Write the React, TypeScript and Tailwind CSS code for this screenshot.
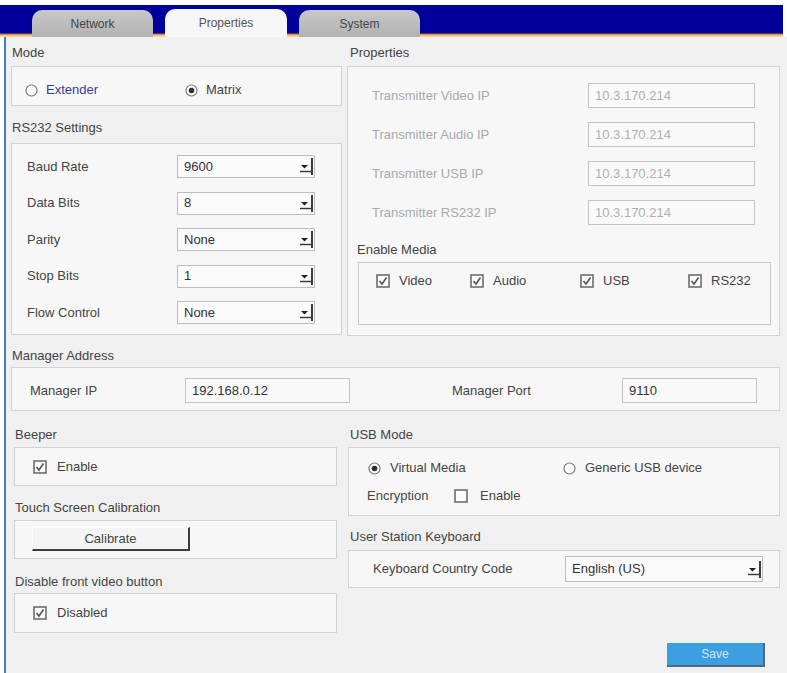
import type { ReactNode } from 'react';

function Label({ children, className = '' }: { children: ReactNode; className?: string }) {
  return <div className={`text-[13px] leading-[16px] text-[#444] ${className}`}>{children}</div>;
}

function CheckBox({ checked = true }: { checked?: boolean }) {
  return (
    <svg width="14" height="14" viewBox="0 0 14 14" className="shrink-0">
      <rect x="1" y="1" width="12" height="12" fill="#fbfbfb" stroke="#6e6e6e" strokeWidth="1.6" />
      {checked && <path d="M3.5 7 L6 10 L10.5 3.5" fill="none" stroke="#5a5a5a" strokeWidth="1.7" />}
    </svg>
  );
}

function Radio({ checked = false }: { checked?: boolean }) {
  return (
    <svg width="13" height="13" viewBox="0 0 13 13" className="shrink-0">
      <circle cx="6.5" cy="6.5" r="5.5" fill="#fbfbfb" stroke="#7a7a7a" strokeWidth="1.2" />
      {checked && <circle cx="6.5" cy="6.5" r="2.8" fill="#2e2e2e" />}
    </svg>
  );
}

function DropArrow() {
  return (
    <svg width="18" height="21" viewBox="0 0 18 21" className="ml-auto shrink-0">
      <path d="M5 9 H12 L8.5 12.5 Z" fill="#222" />
      <line x1="4" y1="15.5" x2="15" y2="15.5" stroke="#333" strokeWidth="1.4" />
      <line x1="16" y1="2" x2="16" y2="19" stroke="#3a3a3a" strokeWidth="2" />
    </svg>
  );
}

function Select({ value, className = '' }: { value: string; className?: string }) {
  return (
    <div className={`flex h-[23px] items-center border border-[#bdbdbd] bg-[#fafafa] pl-[6px] text-[13px] text-[#333] ${className}`}>
      <span>{value}</span>
      <DropArrow />
    </div>
  );
}

function Field({ value, className = '', dim = false }: { value: string; className?: string; dim?: boolean }) {
  return (
    <div
      className={`flex h-[25px] items-center border border-[#c4c4c4] bg-[#f9f9f9] pl-[6px] text-[13px] ${dim ? 'text-[#a8a8a8]' : 'text-[#333]'} ${className}`}
    >
      {value}
    </div>
  );
}

const box = 'border border-[#d2d2d2] bg-[#f7f7f7]';

export default function App() {
  const rs232 = [
    ['Baud Rate', '9600'],
    ['Data Bits', '8'],
    ['Parity', 'None'],
    ['Stop Bits', '1'],
    ['Flow Control', 'None'],
  ];
  const transmitters = ['Transmitter Video IP', 'Transmitter Audio IP', 'Transmitter USB IP', 'Transmitter RS232 IP'];

  return (
    <div className="h-[673px] w-[787px] overflow-hidden bg-white font-['Liberation_Sans',Arial,sans-serif]">
      {/* tab strip */}
      <div className="mr-[4px] mt-[5px] flex h-[32px] items-end gap-[12px] bg-[linear-gradient(to_bottom,#00009a_0,#00009a_28px,#b07040_29px,#f0b860_30px,#fbe2b0_32px)] pl-[32px]">
        <div className="flex h-[27px] w-[121px] items-center justify-center rounded-t-[10px] bg-[linear-gradient(to_bottom,#c8c8c8,#b2b2b2)] text-[12px] text-[#444]">
          Network
        </div>
        <div className="flex h-[28px] w-[122px] items-center justify-center rounded-t-[10px] bg-[#f6f6f6] text-[12px] text-[#555]">
          Properties
        </div>
        <div className="flex h-[27px] w-[121px] items-center justify-center rounded-t-[10px] bg-[linear-gradient(to_bottom,#c8c8c8,#b2b2b2)] text-[12px] text-[#444]">
          System
        </div>
      </div>

      <div className="ml-[4px] h-[636px] border-l-[2px] border-[#4a7cc0] bg-[#f0f0f0] pl-[5px] pr-[7px]">
        {/* top row */}
        <div className="flex gap-[5px]">
          <div className="w-[331px]">
            <Label className="pl-[1px] pt-[8px]">Mode</Label>
            <div className={`mt-[5px] h-[40px] pl-[13px] pt-[15px] ${box}`}>
              <div className="flex h-[16px] items-center text-[13px]">
                <div className="flex w-[160px] items-center gap-[8px] text-[#3b3b9a]">
                  <Radio />
                  Extender
                </div>
                <div className="flex items-center gap-[8px] text-[#444]">
                  <Radio checked />
                  Matrix
                </div>
              </div>
            </div>
            <Label className="mt-[14px] pl-[1px]">RS232 Settings</Label>
            <div className={`mt-[7px] flex h-[192px] flex-col gap-[13.5px] pl-[15px] pt-[11px] ${box}`}>
              {rs232.map(([name, value]) => (
                <div key={name} className="flex items-center">
                  <div className="w-[150px] text-[13px] text-[#444]">{name}</div>
                  <Select value={value} className="w-[138px]" />
                </div>
              ))}
            </div>
          </div>

          <div className="flex-1">
            <Label className="pl-[3px] pt-[8px]">Properties</Label>
            <div className={`mt-[5px] h-[270px] pt-[16px] ${box}`}>
              <div className="flex flex-col gap-[14px] pl-[24px]">
                {transmitters.map((t) => (
                  <div key={t} className="flex items-center">
                    <div className="w-[216px] text-[13px] text-[#a9a9a9]">{t}</div>
                    <Field value="10.3.170.214" dim className="w-[167px] bg-[#f7f7f7] text-[#b0b0b0]" />
                  </div>
                ))}
              </div>
              <Label className="mt-[17px] pl-[9px] text-[#333]">Enable Media</Label>
              <div className="ml-[10px] mr-[8px] mt-[4px] h-[63px] border border-[#c8c8c8] pl-[17px] pt-[10px]">
                <div className="flex h-[16px] items-center text-[13px] text-[#444]">
                  <div className="flex w-[94px] items-center gap-[9px]">
                    <CheckBox />
                    Video
                  </div>
                  <div className="flex w-[110px] items-center gap-[9px]">
                    <CheckBox />
                    Audio
                  </div>
                  <div className="flex w-[108px] items-center gap-[9px]">
                    <CheckBox />
                    USB
                  </div>
                  <div className="flex items-center gap-[9px]">
                    <CheckBox />
                    RS232
                  </div>
                </div>
              </div>
            </div>
          </div>
        </div>

        {/* manager address */}
        <Label className="mt-[12px] pl-[1px]">Manager Address</Label>
        <div className={`mt-[3px] h-[44px] pl-[18px] pt-[10px] ${box}`}>
          <div className="flex items-center text-[13px] text-[#444]">
            <div className="w-[155px]">Manager IP</div>
            <Field value="192.168.0.12" className="w-[165px]" />
            <div className="ml-[102px] w-[170px]">Manager Port</div>
            <Field value="9110" className="w-[135px]" />
          </div>
        </div>

        {/* bottom row */}
        <div className="flex">
          <div className="ml-[3px] w-[323px]">
            <Label className="mt-[16px] pl-[1px]">Beeper</Label>
            <div className={`mt-[4px] flex h-[39px] items-center gap-[10px] pl-[18px] text-[13px] text-[#444] ${box}`}>
              <CheckBox />
              Enable
            </div>
            <Label className="mt-[14px] pl-[1px]">Touch Screen Calibration</Label>
            <div className={`mt-[4px] h-[39px] pl-[17px] pt-[6px] ${box}`}>
              <div className="flex h-[24px] w-[158px] items-center justify-center border-b-[2px] border-r-[2px] border-l border-t border-b-[#3c3c3c] border-l-[#fdfdfd] border-r-[#3c3c3c] border-t-[#fdfdfd] bg-[#f4f4f4] text-[13px] text-[#444]">
                Calibrate
              </div>
            </div>
            <Label className="mt-[15px] pl-[1px]">Disable front video button</Label>
            <div className={`mt-[3px] flex h-[40px] items-center gap-[10px] pl-[18px] text-[13px] text-[#444] ${box}`}>
              <CheckBox />
              Disabled
            </div>
          </div>

          <div className="ml-[11px] flex-1">
            <Label className="mt-[16px] pl-[2px]">USB Mode</Label>
            <div className={`mt-[4px] h-[69px] pl-[19px] pt-[12px] text-[13px] text-[#444] ${box}`}>
              <div className="flex h-[16px] items-center">
                <div className="flex w-[195px] items-center gap-[9px]">
                  <Radio checked />
                  Virtual Media
                </div>
                <div className="flex items-center gap-[9px]">
                  <Radio />
                  Generic USB device
                </div>
              </div>
              <div className="mt-[12px] flex h-[16px] items-center">
                <div className="w-[87px] -ml-[1px]">Encryption</div>
                <div className="flex items-center gap-[12px]">
                  <CheckBox checked={false} />
                  Enable
                </div>
              </div>
            </div>
            <Label className="mt-[13px] pl-[2px]">User Station Keyboard</Label>
            <div className={`mt-[5px] flex h-[38px] items-center pl-[24px] text-[13px] text-[#444] ${box}`}>
              <div className="w-[192px]">Keyboard Country Code</div>
              <Select value="English (US)" className="h-[26px] w-[198px]" />
            </div>
            <div className="ml-[319px] mt-[55px] flex h-[24px] w-[98px] items-center justify-center border-b-[2px] border-r-[2px] border-b-[#55687a] border-r-[#55687a] bg-[#3d9fe2] text-[12px] text-[#cfe6f8]">
              Save
            </div>
          </div>
        </div>
      </div>
    </div>
  );
}
